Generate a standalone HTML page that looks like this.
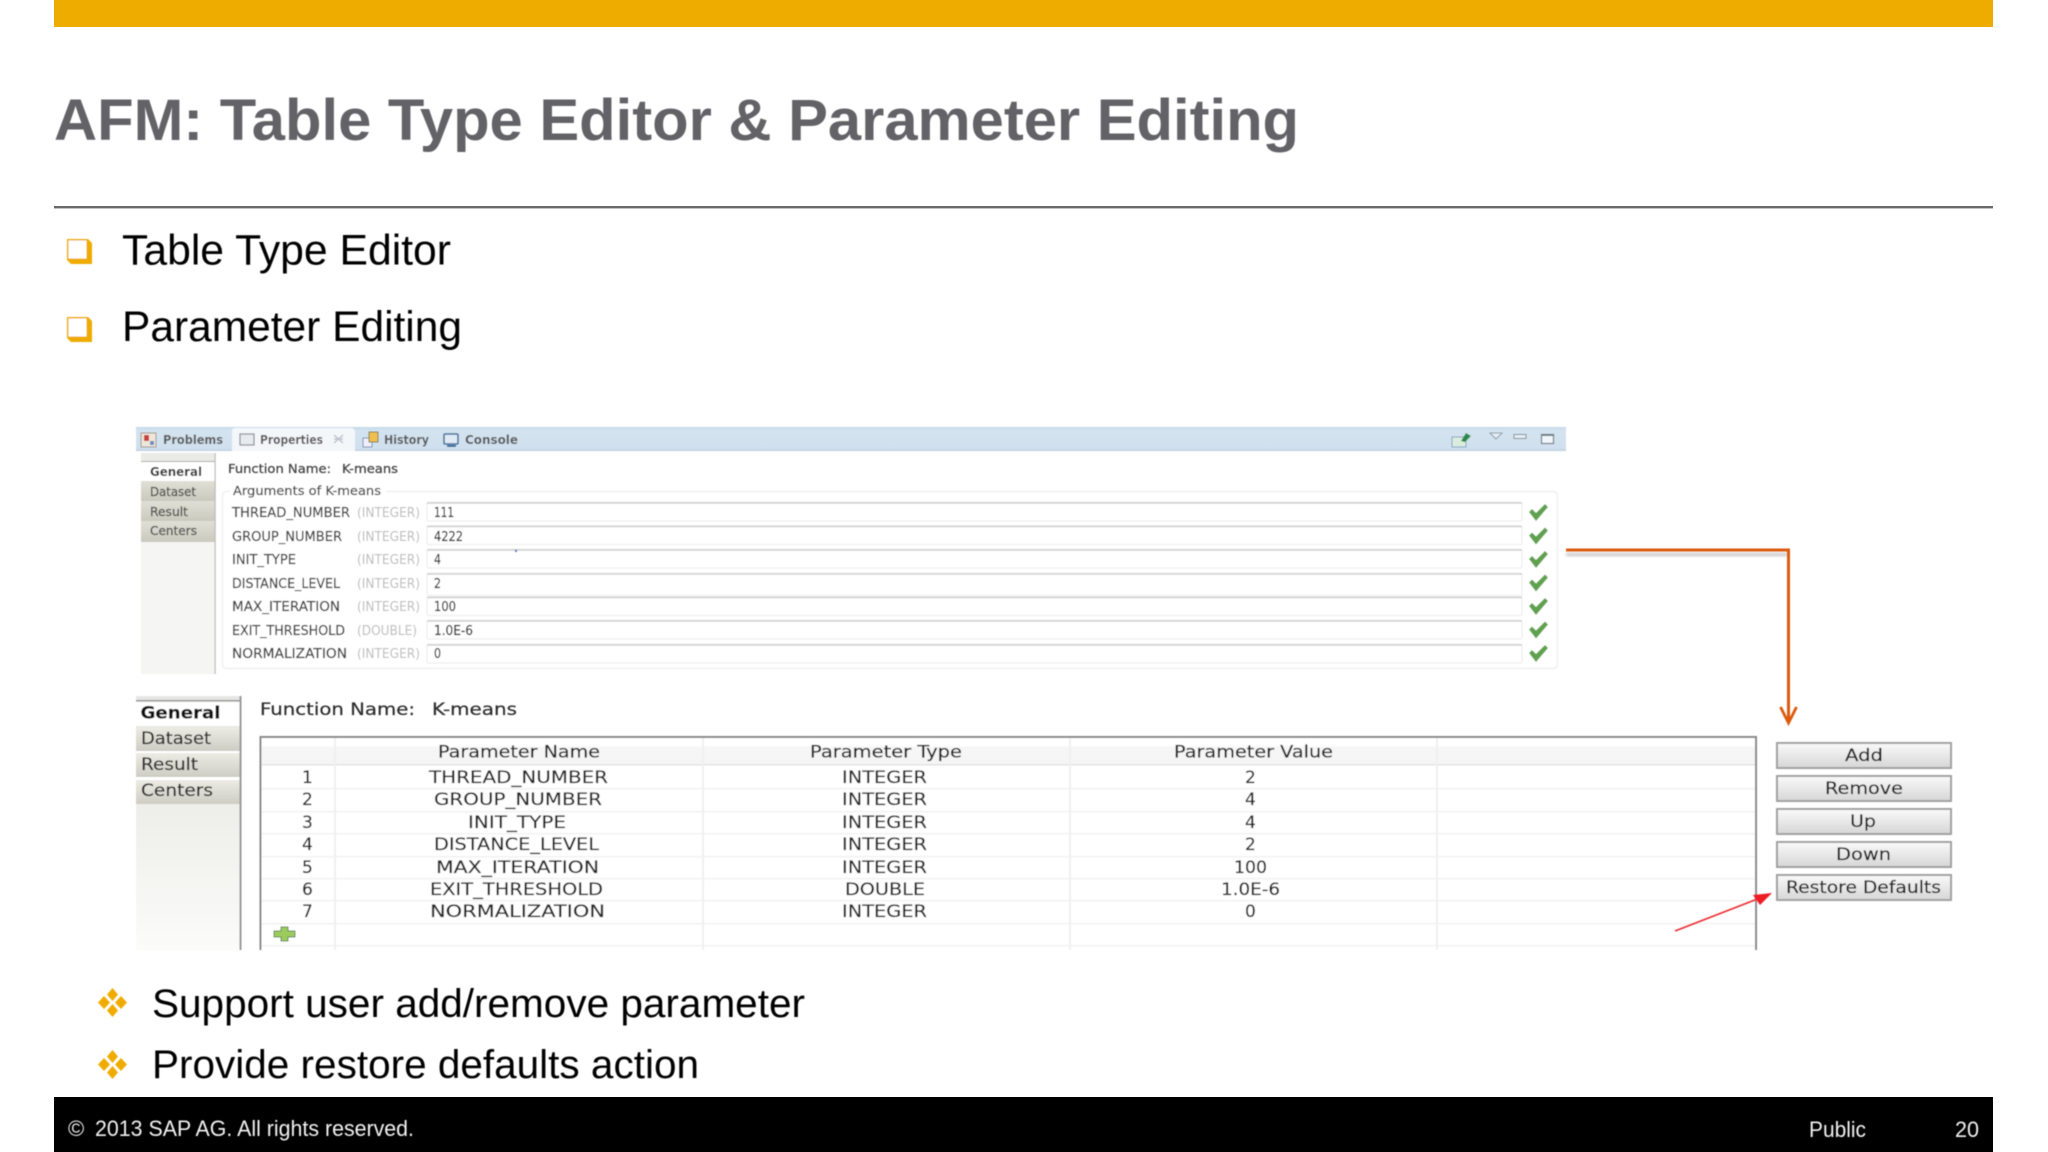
<!DOCTYPE html>
<html><head><meta charset="utf-8"><title>AFM: Table Type Editor &amp; Parameter Editing</title>
<style>
html,body{margin:0;padding:0;background:#fff;width:2048px;height:1152px;overflow:hidden}
svg{display:block}
.s{font-family:"Liberation Sans",sans-serif}
.u{font-family:"DejaVu Sans","Liberation Sans",sans-serif}
.h{stroke:#444;stroke-width:.25}
</style></head><body>
<svg width="2048" height="1152" viewBox="0 0 2048 1152" xmlns="http://www.w3.org/2000/svg">
<defs>
<filter id="b1" x="-2%" y="-2%" width="104%" height="104%"><feGaussianBlur stdDeviation="0.45"/></filter>
<filter id="b2" x="-2%" y="-2%" width="104%" height="104%"><feGaussianBlur stdDeviation="0.6"/></filter>
<filter id="b3" x="-5%" y="-50%" width="110%" height="200%"><feGaussianBlur stdDeviation="1.6"/></filter>
<linearGradient id="tab" x1="0" y1="0" x2="0" y2="1"><stop offset="0" stop-color="#e0e0d6"/><stop offset="1" stop-color="#c9c9bd"/></linearGradient>
<linearGradient id="tab2" x1="0" y1="0" x2="0" y2="1"><stop offset="0" stop-color="#ecece5"/><stop offset="1" stop-color="#cdcdc3"/></linearGradient>
<linearGradient id="side" x1="0" y1="0" x2="0" y2="1"><stop offset="0" stop-color="#e4e4dd"/><stop offset="1" stop-color="#fbfbfa"/></linearGradient>
<linearGradient id="btn" x1="0" y1="0" x2="0" y2="1"><stop offset="0" stop-color="#fafafa"/><stop offset="1" stop-color="#d6d6d6"/></linearGradient>
<linearGradient id="hdr" x1="0" y1="0" x2="0" y2="1"><stop offset="0" stop-color="#ffffff"/><stop offset=".3" stop-color="#ffffff"/><stop offset=".35" stop-color="#f6f6f6"/><stop offset="1" stop-color="#f5f5f5"/></linearGradient>
<linearGradient id="bar" x1="0" y1="0" x2="0" y2="1"><stop offset="0" stop-color="#c5d8e8"/><stop offset=".15" stop-color="#d3e3f0"/><stop offset=".9" stop-color="#d0e0ee"/><stop offset="1" stop-color="#bccfe0"/></linearGradient>
</defs>
<rect width="2048" height="1152" fill="#fff"/>

<!-- slide chrome -->
<rect x="54" y="0" width="1939" height="27" fill="#eeab00"/>
<rect x="54" y="206" width="1939" height="2.4" fill="#6a6a6a"/>
<rect x="54" y="1097" width="1939" height="55" fill="#000"/>

<g filter="url(#b1)" class="s">
<text x="54" y="140" font-size="58" font-weight="bold" fill="#636266" textLength="1245" lengthAdjust="spacingAndGlyphs">AFM: Table Type Editor &amp; Parameter Editing</text>
<text x="122" y="264.500" font-size="43" fill="#000" textLength="329" lengthAdjust="spacingAndGlyphs">Table Type Editor</text>
<text x="122" y="341" font-size="43" fill="#000" textLength="340" lengthAdjust="spacingAndGlyphs">Parameter Editing</text>
<text x="152" y="1017" font-size="40" fill="#000" textLength="653" lengthAdjust="spacingAndGlyphs">Support user add/remove parameter</text>
<text x="152" y="1078" font-size="40" fill="#000" textLength="547" lengthAdjust="spacingAndGlyphs">Provide restore defaults action</text>
<text x="68" y="1136" font-size="22" fill="#f2f2f2">©</text>
<text x="95" y="1136" font-size="22" fill="#f2f2f2" textLength="319" lengthAdjust="spacingAndGlyphs">2013 SAP AG. All rights reserved.</text>
<text x="1809" y="1137" font-size="22" fill="#f2f2f2" textLength="57" lengthAdjust="spacingAndGlyphs">Public</text>
<text x="1955" y="1137" font-size="22" fill="#f2f2f2" textLength="24" lengthAdjust="spacingAndGlyphs">20</text>

<!-- square bullets -->
<path d="M67 239H88L92 243V264H71L67 260Z" fill="#f0ab00"/><rect x="68.500" y="240.500" width="18" height="18" fill="#fff"/>
<path d="M67 317H88L92 321V342H71L67 338Z" fill="#f0ab00"/><rect x="68.500" y="318.500" width="18" height="18" fill="#fff"/>

<!-- diamond bullets -->
<g fill="#f0ab00">
<path d="M112.500 988l5.500 6.500-5.500 6.500-5.500-6.500z"/><path d="M112.500 1004l5.500 6.500-5.500 6.500-5.500-6.500z"/><path d="M104 996l6 6.500-6 6.500-6-6.500z"/><path d="M121 996l6 6.500-6 6.500-6-6.500z"/>
<path d="M112.500 1050l5.500 6.500-5.500 6.500-5.500-6.500z"/><path d="M112.500 1066l5.500 6.500-5.500 6.500-5.500-6.500z"/><path d="M104 1058l6 6.500-6 6.500-6-6.500z"/><path d="M121 1058l6 6.500-6 6.500-6-6.500z"/>
</g>
</g>

<!-- top panel -->
<g filter="url(#b2)" class="u">
<rect x="136" y="427" width="1430" height="24" fill="url(#bar)"/>
<path d="M232 451V431q0-3 3-3H351q3 0 4 3V451Z" fill="#f4f7fa"/>

<rect x="141" y="453" width="74" height="221" fill="#f5f5f3"/>
<rect x="141" y="453" width="74" height="9" fill="#eaeae6"/>
<rect x="141" y="461" width="74" height="1" fill="#aaa"/>
<rect x="141" y="462" width="74" height="19" fill="#fff"/>
<rect x="141" y="481" width="74" height="20" fill="url(#tab)"/>
<rect x="141" y="501" width="74" height="20" fill="url(#tab)"/>
<rect x="141" y="521" width="74" height="21" fill="url(#tab)"/>
<rect x="214.500" y="453" width="1.200" height="221" fill="#bbb"/>

<!-- tab icons -->
<rect x="141" y="433" width="15" height="14" fill="#efe6da" stroke="#a09488"/><rect x="144" y="435" width="5" height="6" fill="#c8423c"/><rect x="150" y="441" width="4" height="4" fill="#6a8fc0"/>
<rect x="240" y="434" width="14" height="11" fill="#e6ebf0" stroke="#8a8f96" stroke-width="1.200"/>
<path d="M334 435l9 8M343 435l-9 8M334 439h3M340 439h3" stroke="#b8bcc8" stroke-width="1.200" fill="none"/>
<rect x="363" y="438" width="9" height="9" fill="#eef" stroke="#7b8ea8"/><rect x="369" y="432" width="9" height="10" fill="#f0c050" stroke="#7b7b50"/>
<rect x="444" y="434" width="14" height="10" rx="1" fill="#dfeaf5" stroke="#3a6a9a" stroke-width="1.500"/><rect x="447" y="445" width="9" height="2" fill="#3a6a9a"/>

<g font-size="12" fill="#5c5c5c" font-weight="bold">
<text x="163" y="444" textLength="60" lengthAdjust="spacingAndGlyphs">Problems</text>
<text x="260" y="444" textLength="63" lengthAdjust="spacingAndGlyphs">Properties</text>
<text x="384" y="444" textLength="45" lengthAdjust="spacingAndGlyphs">History</text>
<text x="465" y="444" textLength="53" lengthAdjust="spacingAndGlyphs">Console</text>
</g>
<!-- right toolbar icons -->
<rect x="1452" y="437" width="14" height="10" fill="#dcecdc" stroke="#7aa3c9"/><path d="M1461 441l5-8 5 3-6 6z" fill="#2a8a4a"/>
<path d="M1490 433h12l-6 6z" fill="#e6eef5" stroke="#8c9aa6"/>
<rect x="1514" y="434.500" width="12" height="4" fill="#e6eef5" stroke="#7d8a96"/>
<rect x="1541.500" y="434.500" width="12" height="9" fill="#f2f6fa" stroke="#6d7a86" stroke-width="1.200"/><rect x="1541.500" y="434" width="12" height="2" fill="#6d7a86"/>

<g fill="#555" font-size="12.500">
<text x="150" y="476" font-weight="bold" fill="#333" textLength="52" lengthAdjust="spacingAndGlyphs">General</text>
<text x="150" y="496" class="h" textLength="46" lengthAdjust="spacingAndGlyphs">Dataset</text>
<text x="150" y="516" class="h" textLength="38" lengthAdjust="spacingAndGlyphs">Result</text>
<text x="150" y="535" class="h" textLength="47" lengthAdjust="spacingAndGlyphs">Centers</text>
<text x="228" y="473" class="h" textLength="103" lengthAdjust="spacingAndGlyphs" fill="#444">Function Name:</text>
<text x="342" y="473" class="h" textLength="56" lengthAdjust="spacingAndGlyphs" fill="#444">K-means</text>
</g>

<rect x="222.500" y="491.500" width="1335" height="177" rx="4" fill="#fff" stroke="#f0f0f0" stroke-width="1.500"/>
<rect x="230" y="486" width="156" height="12" fill="#fff"/>
<text x="233" y="495" font-size="12.500" class="h" fill="#444" textLength="148" lengthAdjust="spacingAndGlyphs">Arguments of K-means</text>

<!-- inputs -->
<g fill="#fff" stroke="#f1f1f1" stroke-width="1.500">
<rect x="427" y="502.500" width="1095" height="18.500" rx="2"/>
<rect x="427" y="526" width="1095" height="18.500" rx="2"/>
<rect x="427" y="549.500" width="1095" height="18.500" rx="2"/>
<rect x="427" y="573.500" width="1095" height="22" rx="2"/>
<rect x="427" y="597" width="1095" height="18.500" rx="2"/>
<rect x="427" y="620.500" width="1095" height="18.500" rx="2"/>
<rect x="427" y="644.500" width="1095" height="18.500" rx="2"/>
</g>
<g fill="#d4d4d4">
<rect x="427" y="502" width="1095" height="1.800"/>
<rect x="427" y="525.500" width="1095" height="1.800"/>
<rect x="427" y="549" width="1095" height="1.800"/>
<rect x="427" y="573" width="1095" height="1.800"/>
<rect x="427" y="596.500" width="1095" height="1.800"/>
<rect x="427" y="620" width="1095" height="1.800"/>
<rect x="427" y="644" width="1095" height="1.800"/>
</g>
<circle cx="516" cy="551" r="1.200" fill="#66c"/>

<g font-size="13" fill="#444" class="h">
<text x="232" y="517" textLength="118" lengthAdjust="spacingAndGlyphs">THREAD_NUMBER</text>
<text x="232" y="541" textLength="110" lengthAdjust="spacingAndGlyphs">GROUP_NUMBER</text>
<text x="232" y="564" textLength="64" lengthAdjust="spacingAndGlyphs">INIT_TYPE</text>
<text x="232" y="588" textLength="108" lengthAdjust="spacingAndGlyphs">DISTANCE_LEVEL</text>
<text x="232" y="611" textLength="108" lengthAdjust="spacingAndGlyphs">MAX_ITERATION</text>
<text x="232" y="635" textLength="113" lengthAdjust="spacingAndGlyphs">EXIT_THRESHOLD</text>
<text x="232" y="658" textLength="115" lengthAdjust="spacingAndGlyphs">NORMALIZATION</text>
</g>
<g font-size="13" fill="#bcbcbc">
<text x="357" y="517" textLength="63" lengthAdjust="spacingAndGlyphs">(INTEGER)</text>
<text x="357" y="541" textLength="63" lengthAdjust="spacingAndGlyphs">(INTEGER)</text>
<text x="357" y="564" textLength="63" lengthAdjust="spacingAndGlyphs">(INTEGER)</text>
<text x="357" y="588" textLength="63" lengthAdjust="spacingAndGlyphs">(INTEGER)</text>
<text x="357" y="611" textLength="63" lengthAdjust="spacingAndGlyphs">(INTEGER)</text>
<text x="357" y="635" textLength="60" lengthAdjust="spacingAndGlyphs">(DOUBLE)</text>
<text x="357" y="658" textLength="63" lengthAdjust="spacingAndGlyphs">(INTEGER)</text>
</g>
<g font-size="13" fill="#333" class="h">
<text x="434" y="517" textLength="20" lengthAdjust="spacingAndGlyphs">111</text>
<text x="434" y="541" textLength="29" lengthAdjust="spacingAndGlyphs">4222</text>
<text x="434" y="564" textLength="7" lengthAdjust="spacingAndGlyphs">4</text>
<text x="434" y="588" textLength="7" lengthAdjust="spacingAndGlyphs">2</text>
<text x="434" y="611" textLength="22" lengthAdjust="spacingAndGlyphs">100</text>
<text x="434" y="635" textLength="39" lengthAdjust="spacingAndGlyphs">1.0E-6</text>
<text x="434" y="658" textLength="7" lengthAdjust="spacingAndGlyphs">0</text>
</g>
<g fill="#5fa14d">
<path id="c" d="M1529 512l3-3 4 4 9-9 3 3-12 14z"/>
<path d="M1529 535.500l3-3 4 4 9-9 3 3-12 14z"/>
<path d="M1529 559l3-3 4 4 9-9 3 3-12 14z"/>
<path d="M1529 582.500l3-3 4 4 9-9 3 3-12 14z"/>
<path d="M1529 606l3-3 4 4 9-9 3 3-12 14z"/>
<path d="M1529 629.500l3-3 4 4 9-9 3 3-12 14z"/>
<path d="M1529 653l3-3 4 4 9-9 3 3-12 14z"/>
</g>
</g>

<!-- orange connector -->
<rect x="1566" y="553" width="222" height="3" fill="#888" opacity=".5" filter="url(#b3)"/>
<g filter="url(#b1)" fill="none" stroke="#dc5a10">
<path d="M1566 550H1788.500V722" stroke-width="3"/>
<path d="M1780.500 707l8 16 8-16" stroke-width="2.800"/>
</g>

<!-- bottom panel -->
<g filter="url(#b2)" class="u">
<rect x="136" y="696" width="104" height="254" fill="url(#side)"/>
<rect x="136" y="696" width="104" height="5" fill="#e6e6e6"/>
<rect x="136" y="700" width="104" height="1.500" fill="#999"/>
<rect x="136" y="702" width="104" height="24" fill="#fff"/>
<rect x="136" y="727" width="104" height="24" fill="url(#tab2)"/>
<rect x="136" y="751" width="104" height="2" fill="#fff"/>
<rect x="136" y="753" width="104" height="24" fill="url(#tab2)"/>
<rect x="136" y="777" width="104" height="3" fill="#fff"/>
<rect x="136" y="780" width="104" height="24" fill="url(#tab2)"/>
<rect x="239.500" y="696" width="2" height="254" fill="#999"/>

<g font-size="17" fill="#2a2a2a" class="h">
<text x="140.500" y="718.500" font-weight="bold" fill="#111" textLength="80" lengthAdjust="spacingAndGlyphs">General</text>
<text x="141" y="744" textLength="70" lengthAdjust="spacingAndGlyphs">Dataset</text>
<text x="141" y="770" textLength="57" lengthAdjust="spacingAndGlyphs">Result</text>
<text x="141" y="796" textLength="72" lengthAdjust="spacingAndGlyphs">Centers</text>
<text x="260" y="715" textLength="155" lengthAdjust="spacingAndGlyphs">Function Name:</text>
<text x="432" y="715" textLength="85" lengthAdjust="spacingAndGlyphs">K-means</text>
</g>

<!-- table -->
<rect x="260" y="736" width="1497" height="214" fill="#fff"/>
<rect x="262" y="738" width="1493" height="26" fill="url(#hdr)"/>
<rect x="262" y="764" width="1493" height="1.500" fill="#e2e2e2"/>
<g fill="#f0f0f3">
<rect x="262" y="788" width="1493" height="1.300"/><rect x="262" y="811" width="1493" height="1.300"/><rect x="262" y="833" width="1493" height="1.300"/><rect x="262" y="856" width="1493" height="1.300"/><rect x="262" y="878" width="1493" height="1.300"/><rect x="262" y="900" width="1493" height="1.300"/><rect x="262" y="923" width="1493" height="1.300"/><rect x="262" y="945" width="1493" height="1.300"/>
<rect x="334" y="738" width="2" height="212"/><rect x="702" y="738" width="2" height="212"/><rect x="1069" y="738" width="2" height="212"/><rect x="1436" y="738" width="2" height="212"/>
</g>
<path d="M260.500 950V737H1756V950" fill="none" stroke="#888" stroke-width="2"/>

<g font-size="17" fill="#222" class="h">
<text x="438" y="757.500" textLength="162" lengthAdjust="spacingAndGlyphs">Parameter Name</text>
<text x="810" y="757.500" textLength="152" lengthAdjust="spacingAndGlyphs">Parameter Type</text>
<text x="1174" y="757.500" textLength="159" lengthAdjust="spacingAndGlyphs">Parameter Value</text>

<text x="302" y="783">1</text><text x="302" y="805">2</text><text x="302" y="828">3</text><text x="302" y="850">4</text><text x="302" y="873">5</text><text x="302" y="895">6</text><text x="302" y="917">7</text>

<text x="429" y="783" textLength="179" lengthAdjust="spacingAndGlyphs">THREAD_NUMBER</text>
<text x="434" y="805" textLength="168" lengthAdjust="spacingAndGlyphs">GROUP_NUMBER</text>
<text x="468" y="828" textLength="98" lengthAdjust="spacingAndGlyphs">INIT_TYPE</text>
<text x="434" y="850" textLength="165" lengthAdjust="spacingAndGlyphs">DISTANCE_LEVEL</text>
<text x="436" y="873" textLength="163" lengthAdjust="spacingAndGlyphs">MAX_ITERATION</text>
<text x="430" y="895" textLength="173" lengthAdjust="spacingAndGlyphs">EXIT_THRESHOLD</text>
<text x="430" y="917" textLength="175" lengthAdjust="spacingAndGlyphs">NORMALIZATION</text>

<text x="842" y="783" textLength="85" lengthAdjust="spacingAndGlyphs">INTEGER</text>
<text x="842" y="805" textLength="85" lengthAdjust="spacingAndGlyphs">INTEGER</text>
<text x="842" y="828" textLength="85" lengthAdjust="spacingAndGlyphs">INTEGER</text>
<text x="842" y="850" textLength="85" lengthAdjust="spacingAndGlyphs">INTEGER</text>
<text x="842" y="873" textLength="85" lengthAdjust="spacingAndGlyphs">INTEGER</text>
<text x="845" y="895" textLength="80" lengthAdjust="spacingAndGlyphs">DOUBLE</text>
<text x="842" y="917" textLength="85" lengthAdjust="spacingAndGlyphs">INTEGER</text>

<text x="1245" y="783">2</text>
<text x="1245" y="805">4</text>
<text x="1245" y="828">4</text>
<text x="1245" y="850">2</text>
<text x="1234" y="873" textLength="33" lengthAdjust="spacingAndGlyphs">100</text>
<text x="1221" y="895" textLength="59" lengthAdjust="spacingAndGlyphs">1.0E-6</text>
<text x="1245" y="917">0</text>
</g>
<path d="M281 927h7v4h7v6h-7v4h-7v-4h-7v-6h7z" fill="#9ccb5c" stroke="#5f8a5a" stroke-width="1"/>

<!-- buttons -->
<g fill="url(#btn)" stroke="#a0a0a0" stroke-width="2">
<rect x="1777" y="743" width="174" height="25"/>
<rect x="1777" y="776" width="174" height="25"/>
<rect x="1777" y="809" width="174" height="25"/>
<rect x="1777" y="842" width="174" height="25"/>
<rect x="1777" y="875" width="174" height="25"/>
</g>
<g font-size="17" fill="#1e1e1e" class="h">
<text x="1845" y="761" textLength="38" lengthAdjust="spacingAndGlyphs">Add</text>
<text x="1825" y="794" textLength="78" lengthAdjust="spacingAndGlyphs">Remove</text>
<text x="1850" y="827" textLength="26" lengthAdjust="spacingAndGlyphs">Up</text>
<text x="1836" y="860" textLength="55" lengthAdjust="spacingAndGlyphs">Down</text>
<text x="1786" y="893" textLength="155" lengthAdjust="spacingAndGlyphs">Restore Defaults</text>
</g>
</g>

<!-- red arrow -->
<g filter="url(#b1)">
<path d="M1675 931L1760 898" stroke="#ee2a2e" stroke-width="1.600" fill="none"/>
<path d="M1772 893L1753 895L1760 905Z" fill="#ee1c25"/>
</g>
</svg>
</body></html>
